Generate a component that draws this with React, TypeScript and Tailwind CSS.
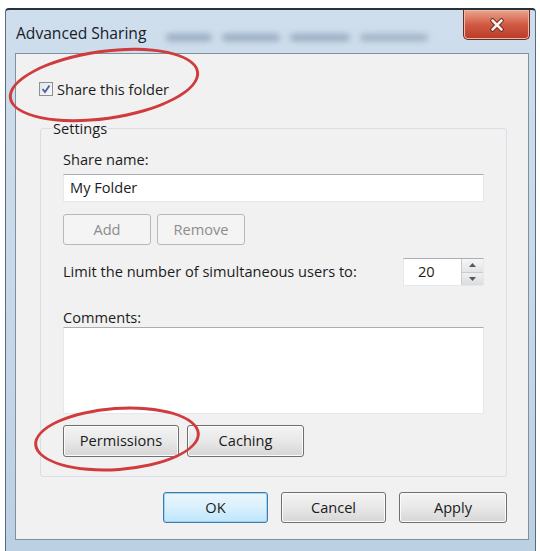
import React from "react";

function WinButton({
  label,
  className = "",
  disabled = false,
  focused = false,
}: {
  label: string;
  className?: string;
  disabled?: boolean;
  focused?: boolean;
}) {
  const look = disabled
    ? "border-[#b5b9bc] bg-[#f4f4f4] text-[#8d8d8d]"
    : focused
    ? "border-[#3d7bad] bg-gradient-to-b from-[#eaf6fd] via-[#d9f0fc] to-[#bee6fd] text-[#1a1a1a] shadow-[inset_0_0_0_1px_#9fd3ee]"
    : "border-[#707070] bg-gradient-to-b from-[#f4f4f4] via-[#e8e8e8] to-[#d6d6d6] text-[#1a1a1a] shadow-[inset_0_0_0_1px_#fbfbfb]";
  return (
    <button
      type="button"
      className={`flex items-center justify-center rounded-[3px] border text-[14.6px] ${look} ${className}`}
    >
      {label}
    </button>
  );
}

export default function App() {
  return (
    <div className="relative h-[551px] w-[540px] overflow-hidden bg-white font-['Open_Sans','Noto_Sans',sans-serif] text-[14.6px] text-[#1c1c1c]">
      {/* window frame */}
      <div className="ml-[5px] mt-[8px] flex h-[545px] w-[531px] flex-col rounded-t-[4px] border-x border-t-2 border-x-[#5b6b7d] border-t-[#27303b] bg-gradient-to-b from-[#cfdeec] via-[#c8d9e9] to-[#bcd0e3]">
        {/* title bar */}
        <div className="flex h-[43px] items-start">
          <div className="ml-[10px] mt-[14px] text-[15.6px] leading-[18px] text-[#17202b]">Advanced Sharing</div>
          <div className="ml-[20px] mt-[24px] flex flex-1 gap-[10px] opacity-60 blur-[3px]">
            <div className="h-[7px] w-[46px] rounded-full bg-[#6f86a0]" />
            <div className="h-[7px] w-[58px] rounded-full bg-[#6f86a0]" />
            <div className="h-[7px] w-[60px] rounded-full bg-[#6f86a0]" />
            <div className="h-[7px] w-[68px] rounded-full bg-[#7d92aa]" />
          </div>
          <div className="mr-[5px] flex h-[30px] w-[67px] items-center justify-center rounded-b-[5px] border border-t-0 border-[#6a2c22] bg-gradient-to-b from-[#e9a58f] via-[#d15a43] to-[#b83a26] shadow-[inset_0_0_0_1px_#f0b8a8]">
            <svg width="18" height="16" viewBox="0 0 18 16">
              <path d="M4.5 3.5 L13.5 12.5 M13.5 3.5 L4.5 12.5" stroke="#5a2018" strokeWidth="4.5" strokeLinecap="round" />
              <path d="M4.5 3.5 L13.5 12.5 M13.5 3.5 L4.5 12.5" stroke="#fbeeea" strokeWidth="2.6" strokeLinecap="round" />
            </svg>
          </div>
        </div>

        {/* client area */}
        <div className="ml-[9px] flex h-[487px] w-[514px] flex-col border border-[#7f90a3] bg-[#f1f1f1]">
          {/* share checkbox */}
          <div className="ml-[23px] mt-[27px] flex items-center gap-[4px] leading-[16px]">
            <div className="flex h-[14px] w-[14px] items-center justify-center border border-[#8e8f8f] bg-gradient-to-br from-[#e2e7ee] to-[#f8f8f8]">
              <svg width="10" height="10" viewBox="0 0 10 10">
                <path d="M1.5 5 L4 8 L8.5 1.5" fill="none" stroke="#4a5f97" strokeWidth="1.8" />
              </svg>
            </div>
            <span>Share this folder</span>
          </div>

          {/* settings group */}
          <fieldset className="ml-[24px] mt-[22px] w-[467px] rounded-[3px] border border-[#d5dfe5] px-[22px] pb-[19px]">
            <legend className="-ml-[11px] px-[1px] leading-[18px]">Settings</legend>
            <div className="mt-[12px] leading-[20px]">Share name:</div>
            <div className="mt-[5px] flex h-[28px] items-center border border-[#e3e9ef] border-t-[#abadb3] bg-white px-[6px]">
              My Folder
            </div>
            <div className="mt-[12px] flex gap-[6px]">
              <WinButton label="Add" disabled className="h-[31px] w-[88px]" />
              <WinButton label="Remove" disabled className="h-[31px] w-[88px]" />
            </div>
            <div className="mt-[13px] flex items-center justify-between">
              <span>Limit the number of simultaneous users to:</span>
              <div className="flex h-[28px] w-[81px] border border-[#e3e9ef] border-t-[#abadb3] bg-white">
                <div className="flex flex-1 items-center pl-[14px]">20</div>
                <div className="flex w-[22px] flex-col border-l border-[#c8ccd0]">
                  <div className="flex flex-1 items-center justify-center border-b border-[#c8ccd0] bg-gradient-to-b from-[#f6f6f6] to-[#e4e4e4]">
                    <svg width="7" height="4" viewBox="0 0 7 4">
                      <path d="M0 4 L3.5 0 L7 4 Z" fill="#4d5a6a" />
                    </svg>
                  </div>
                  <div className="flex flex-1 items-center justify-center bg-gradient-to-b from-[#f0f0f0] to-[#dcdcdc]">
                    <svg width="7" height="4" viewBox="0 0 7 4">
                      <path d="M0 0 L3.5 4 L7 0 Z" fill="#4d5a6a" />
                    </svg>
                  </div>
                </div>
              </div>
            </div>
            <div className="mt-[22px] leading-[19px]">Comments:</div>
            <div className="h-[87px] border border-[#e3e9ef] border-t-[#abadb3] bg-white" />
            <div className="mt-[11px] flex gap-[8px]">
              <WinButton label="Permissions" className="h-[32px] w-[116px]" />
              <WinButton label="Caching" className="h-[32px] w-[117px]" />
            </div>
          </fieldset>

          {/* dialog buttons */}
          <div className="mt-[15px] flex justify-end gap-[13px] pr-[21px]">
            <WinButton label="OK" focused className="h-[31px] w-[105px]" />
            <WinButton label="Cancel" className="h-[31px] w-[105px]" />
            <WinButton label="Apply" className="h-[31px] w-[108px]" />
          </div>
        </div>
      </div>

      {/* red annotation ellipses */}
      <div className="absolute left-[8px] top-[50px] h-[70px] w-[192px] -rotate-[8deg] rounded-[50%] border-[3px] border-[#d03b3d]" />
      <div className="absolute left-[34px] top-[407px] h-[64px] w-[166px] -rotate-[4deg] rounded-[50%] border-[3px] border-[#d03b3d]" />
    </div>
  );
}
